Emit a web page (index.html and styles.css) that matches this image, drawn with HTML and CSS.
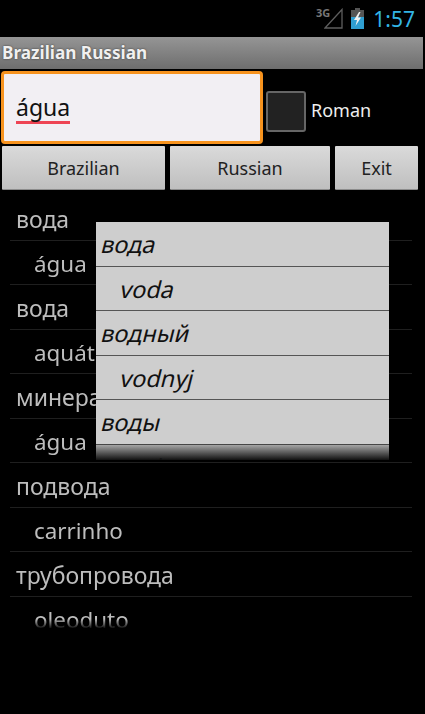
FILE: index.html
```html
<!DOCTYPE html>
<html>
<head>
  <meta charset="UTF-8">
  <link rel="stylesheet" href="styles.css">
</head>
<body>
  <div class="screen">
    <!-- status bar -->
    <div class="status-bar">
      <span class="net-label">3G</span>
      <svg class="signal" width="19" height="21" viewBox="0 0 19 21">
        <path d="M1 20 L18 1.5 V20 Z" fill="none" stroke="#5e5e5e" stroke-width="1.3"/>
      </svg>
      <svg class="battery" width="13" height="21" viewBox="0 0 13 21">
        <rect x="4" y="0" width="5" height="2" fill="#555"/>
        <rect x="0" y="2" width="13" height="19" fill="#555"/>
        <rect x="0" y="9" width="13" height="12" fill="#2f9fd2"/>
        <path d="M8 4 L3 12 H6 L4.5 18 L10 9.5 H7 L9.5 4 Z" fill="#f2f2f2"/>
      </svg>
      <span class="clock">1:57</span>
    </div>

    <div class="title-bar">Brazilian Russian</div>

    <!-- search row -->
    <div class="search-row">
      <div class="search-field"><span class="search-text">água</span></div>
      <div class="checkbox"></div>
      <span class="checkbox-label">Roman</span>
    </div>

    <div class="button-row">
      <button class="btn btn-brazilian">Brazilian</button>
      <button class="btn btn-russian">Russian</button>
      <button class="btn btn-exit">Exit</button>
    </div>

    <!-- results -->
    <div class="results">
      <div class="result-row">вода</div>
      <div class="result-row sub">água</div>
      <div class="result-row">вода</div>
      <div class="result-row sub">aquático</div>
      <div class="result-row">минеральная</div>
      <div class="result-row sub">água</div>
      <div class="result-row">подвода</div>
      <div class="result-row sub">carrinho</div>
      <div class="result-row">трубопровода</div>
      <div class="result-row sub">oleoduto</div>
    </div>

    <!-- suggestions popup -->
    <div class="suggestions">
      <div class="suggestion"><span class="slant">вода</span></div>
      <div class="suggestion sub"><span class="slant">voda</span></div>
      <div class="suggestion"><span class="slant">водный</span></div>
      <div class="suggestion sub"><span class="slant">vodnyj</span></div>
      <div class="suggestion"><span class="slant">воды</span></div>
      <div class="suggestion sub"><span class="slant">vody</span></div>
    </div>
  </div>
</body>
</html>
```

FILE: styles.css
```css
* {
  box-sizing: border-box;
}

body {
  margin: 0;
  background: #000;
}

.screen {
  position: relative;
  width: 425px;
  height: 714px;
  overflow: hidden;
  background: #000;
  font-family: "Noto Sans", "Open Sans", sans-serif;
}

/* status bar */
.status-bar {
  display: flex;
  align-items: center;
  justify-content: flex-end;
  height: 37px;
  padding-right: 10px;
}

.net-label {
  align-self: flex-start;
  margin: 5px -6px 0 0;
  font-size: 11px;
  font-weight: 700;
  color: #777;
}

.signal {
  margin-right: 8px;
}

.battery {
  margin-right: 9px;
}

.clock {
  font-size: 21px;
  color: #33b5e5;
}

/* title */
.title-bar {
  width: 423px;
  height: 32px;
  padding-left: 2px;
  line-height: 32px;
  font-size: 17.2px;
  font-weight: 700;
  color: #f0f0f0;
  background: linear-gradient(#959595, #6e6e6e);
  text-shadow: 0 0 2px #333;
}

/* search row */
.search-row {
  display: flex;
  align-items: center;
  height: 73px;
  margin-top: 2px;
  padding-left: 1px;
}

.search-field {
  display: flex;
  align-items: center;
  width: 262px;
  height: 73px;
  padding: 1px 0 0 12px;
  background: #f2eff3;
  border: 3px solid #f7931e;
  border-radius: 4px;
}

.search-text {
  font-size: 23px;
  line-height: 28px;
  color: #111;
  border-bottom: 3px solid #ee4453;
}

.checkbox {
  width: 40px;
  height: 41px;
  margin: 7px 0 0 3px;
  background: #222;
  border: 2px solid #666;
  border-radius: 3px;
}

.checkbox-label {
  margin: 4px 0 0 5px;
  font-size: 18px;
  color: #eee;
}

/* buttons */
.button-row {
  display: flex;
  gap: 5px;
  height: 44px;
  margin-top: 2px;
  padding-left: 2px;
}

.btn {
  padding: 0;
  font-family: inherit;
  font-size: 18px;
  color: #222;
  background: linear-gradient(#dadada, #bfbfbf);
  border: 0;
  border-bottom: 1px solid #8c8c8c;
  border-radius: 1px;
}

.btn-brazilian {
  width: 163px;
}

.btn-russian {
  width: 160px;
}

.btn-exit {
  width: 83px;
}

/* result list */
.results {
  height: 440px;
  padding: 6px 13px 0 10px;
  overflow: hidden;
  mask-image: linear-gradient(#000 calc(100% - 11px), transparent calc(100% - 1px));
}

.result-row {
  height: 44.5px;
  padding-left: 6px;
  line-height: 47px;
  font-size: 23px;
  color: #bdbdbd;
  border-bottom: 1px solid #1f1f1f;
}

.result-row.sub {
  padding-left: 24px;
  line-height: 45px;
  font-size: 22.4px;
}

/* suggestions popup */
.suggestions {
  position: absolute;
  left: 96px;
  top: 222px;
  width: 293px;
  height: 238px;
  overflow: hidden;
  background: #cecece;
}

.suggestions::after {
  content: "";
  position: absolute;
  left: 0;
  right: 0;
  top: 222px;
  height: 16px;
  background: linear-gradient(rgba(0, 0, 0, 0.15), #111);
}

.suggestion {
  height: 44.5px;
  padding-left: 6px;
  line-height: 44px;
  font-size: 23.5px;
  color: #111;
  border-bottom: 1.5px solid #555;
}

.suggestion.sub {
  padding-left: 25px;
}

/* Droid had no italic, so the device slanted the upright glyphs */
.slant {
  display: inline-block;
  transform: skewX(-14deg);
}
```
